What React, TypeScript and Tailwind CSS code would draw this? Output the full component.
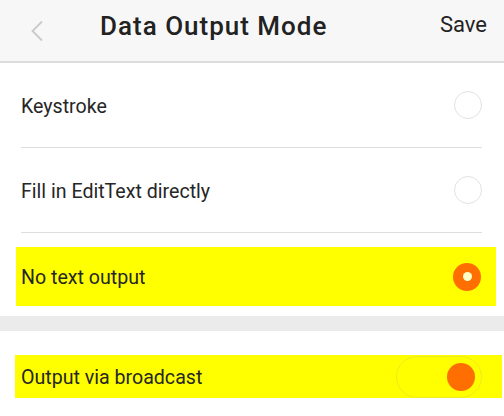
import React from 'react';

const Radio: React.FC<{ checked?: boolean }> = ({ checked }) =>
  checked ? (
    <div className="w-[28px] h-[28px] rounded-full bg-[#ff6e00] flex items-center justify-center">
      <div className="w-[9px] h-[9px] rounded-full bg-[#ffffc8]" />
    </div>
  ) : (
    <div className="w-[28px] h-[28px] rounded-full border border-[#e2e2e2] bg-white" />
  );

const App: React.FC = () => {
  const options = ['Keystroke', 'Fill in EditText directly'];

  return (
    <div className="w-[504px] h-[416px] bg-white overflow-hidden text-[#212121]" style={{ fontFamily: 'Roboto, "Noto Sans", sans-serif' }}>
      <div className="h-[63px] bg-[#f7f7f7] border-b-2 border-[#dcdcdc] flex items-center pl-[30px] pr-[17px]">
        <svg width="14" height="22" viewBox="0 0 14 22" className="shrink-0">
          <path d="M12 1.5 L2.5 11 L12 20.5" fill="none" stroke="#c9c9c9" strokeWidth="1.8" />
        </svg>
        <h1 className="ml-[56px] text-[26px] font-medium leading-none tracking-[1px] text-[#222] -mt-[10px]">Data Output Mode</h1>
        <button className="ml-auto text-[22px] leading-none text-[#222] -mt-[12px]">Save</button>
      </div>

      {options.map((label) => (
        <div key={label} className="ml-[21px] mr-[22px] h-[85px] border-b border-[#dedede] flex items-center">
          <span className="mt-[3px] text-[19.6px] text-[#262626]">{label}</span>
          <div className="ml-auto">
            <Radio />
          </div>
        </div>
      ))}

      <div className="mt-[14px] ml-[16px] mr-[8px] h-[59px] bg-[#ffff00] flex items-center pl-[5px] pr-[15px]">
        <span className="mt-[3px] text-[19.6px] text-[#262626]">No text output</span>
        <div className="ml-auto">
          <Radio checked />
        </div>
      </div>

      <div className="mt-[10px] h-[15px] bg-[#ebebeb]" />

      <div className="mt-[24px] ml-[15px] mr-[2px] h-[43px] bg-[#ffff00] flex items-center pl-[6px] pr-[20px]">
        <span className="mt-[2px] text-[19.6px] text-[#262626]">Output via broadcast</span>
        <div className="ml-auto w-[86px] h-[42px] rounded-full border border-[#ecec20] flex items-center justify-end pr-[6px]">
          <div className="w-[28px] h-[28px] rounded-full bg-[#ff6e00]" />
        </div>
      </div>
    </div>
  );
};

export default App;
